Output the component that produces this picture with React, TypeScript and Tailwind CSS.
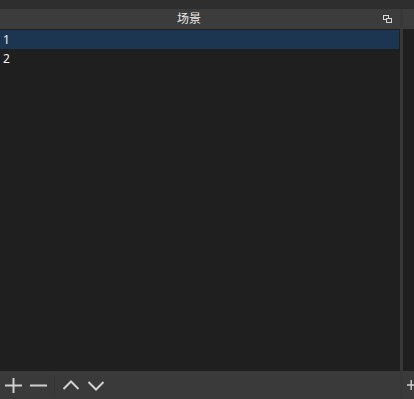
import { useState } from "react";

const scenes = ["1", "2"];

function FloatIcon() {
  return (
    <svg width="9" height="8" viewBox="0 0 9 8" fill="none">
      <rect x="0.5" y="0.5" width="5" height="4" stroke="#d8d8d8" />
      <rect x="3.5" y="3.5" width="5" height="4" fill="#3c3c3c" stroke="#d8d8d8" />
    </svg>
  );
}

function ToolButton({ children }: { children: React.ReactNode }) {
  return (
    <button type="button" className="flex h-[24px] w-[25px] items-center justify-center">
      {children}
    </button>
  );
}

export default function App() {
  const [selected, setSelected] = useState(0);

  return (
    <div
      className="flex h-[399px] w-[414px] flex-col overflow-hidden bg-[#2e2e2e] text-[12px] text-[#e6e6e6]"
      style={{ fontFamily: '"Noto Sans", "Noto Sans CJK SC", sans-serif' }}
    >
      <div className="h-[9px] shrink-0" />

      <div className="flex min-h-0 flex-1">
        {/* scenes dock */}
        <div className="flex w-[400px] shrink-0 flex-col">
          <div className="flex h-[20px] shrink-0 items-center bg-[#3c3c3c]">
            <span className="w-[378px] text-center leading-none text-[#e8e8e8]">场景</span>
            <span className="ml-[5px]">
              <FloatIcon />
            </span>
          </div>

          <div className="flex-1 bg-[#1f1f1f] pt-[1px] pr-[1px]">
            {scenes.map((name, i) => (
              <div
                key={name}
                onClick={() => setSelected(i)}
                className={
                  i === selected
                    ? "flex h-[19px] items-center bg-[#1c3550] px-[3px] text-[#f0f0f0]"
                    : "flex h-[19px] items-center px-[3px] text-[#f0f0f0]"
                }
              >
                {name}
              </div>
            ))}
          </div>

          <div className="flex h-[28px] shrink-0 items-center bg-[#3a3a3a] pl-[1px]">
            <ToolButton>
              <svg width="17" height="15" viewBox="0 0 17 15" stroke="#d0d0d0" strokeWidth="2">
                <path d="M8.5 0v15M0 7.5h17" />
              </svg>
            </ToolButton>
            <ToolButton>
              <svg width="17" height="15" viewBox="0 0 17 15" stroke="#d0d0d0" strokeWidth="2">
                <path d="M0 7.5h17" />
              </svg>
            </ToolButton>
            <div className="mx-[3px] h-[20px] w-px bg-[#343434]" />
            <ToolButton>
              <svg width="18" height="16" viewBox="0 0 18 16" fill="none" stroke="#d0d0d0" strokeWidth="2">
                <path d="M1.5 12l7.5-7.5 7.5 7.5" />
              </svg>
            </ToolButton>
            <ToolButton>
              <svg width="18" height="16" viewBox="0 0 18 16" fill="none" stroke="#d0d0d0" strokeWidth="2">
                <path d="M1.5 5l7.5 7.5 7.5-7.5" />
              </svg>
            </ToolButton>
          </div>
        </div>

        {/* splitter */}
        <div className="w-[3px] shrink-0 bg-[#383838]" />

        {/* next dock, cut off */}
        <div className="flex min-w-0 flex-1 flex-col">
          <div className="h-[20px] shrink-0 bg-[#3c3c3c]" />
          <div className="flex-1 bg-[#1f1f1f]" />
          <div className="flex h-[28px] shrink-0 items-center bg-[#3a3a3a] pl-[4px]">
            <svg width="10" height="16" viewBox="0 0 10 16" stroke="#d0d0d0" strokeWidth="2">
              <path d="M6 1v14M0 8h10" />
            </svg>
          </div>
        </div>
      </div>
    </div>
  );
}
